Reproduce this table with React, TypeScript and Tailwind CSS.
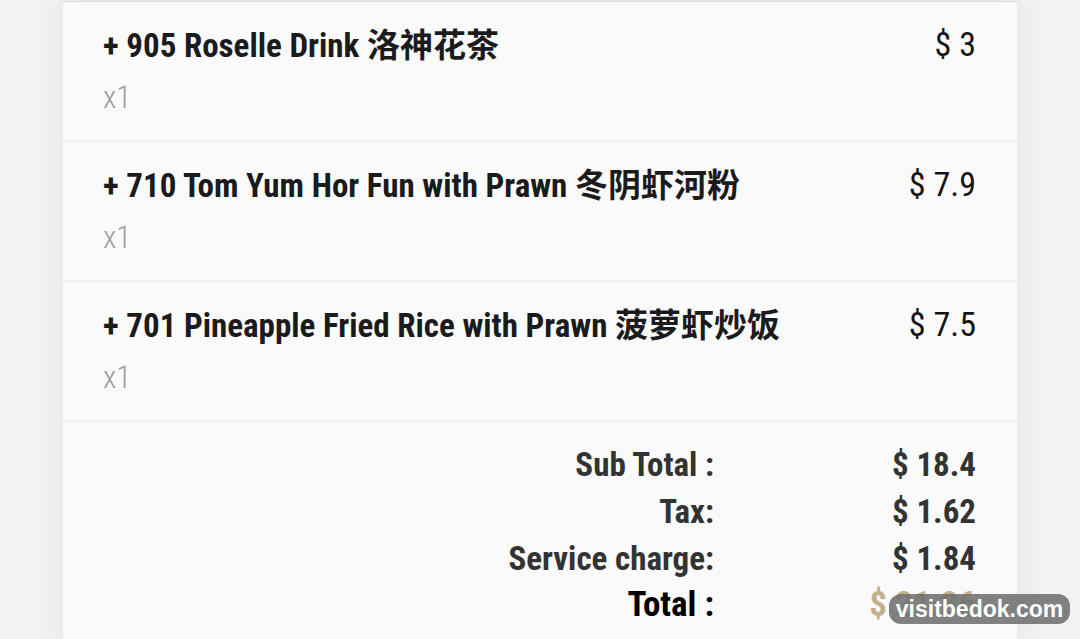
const ITEMS = [
  { name: "+ 905 Roselle Drink 洛神花茶", qty: 1, price: "3" },
  { name: "+ 710 Tom Yum Hor Fun with Prawn 冬阴虾河粉", qty: 1, price: "7.9" },
  { name: "+ 701 Pineapple Fried Rice with Prawn 菠萝虾炒饭", qty: 1, price: "7.5" },
];

const SUMMARY = [
  { label: "Sub Total :", value: "$ 18.4" },
  { label: "Tax:", value: "$ 1.62" },
  { label: "Service charge:", value: "$ 1.84" },
];

const FONT =
  "font-['Roboto_Condensed','Liberation_Sans_Narrow','DejaVu_Sans_Condensed',Roboto,'Noto_Sans_CJK_SC',sans-serif]";

export default function App() {
  return (
    <div className={`relative h-[639px] w-[1080px] overflow-hidden bg-[#f2f2f2] ${FONT}`}>
      <div className="mx-[63px] mt-px h-full border-t-[1.5px] border-[#dddce3] bg-[#fafafa] shadow-[0_0_28px_rgba(0,0,0,0.07)]">
        {ITEMS.map((item) => (
          <div
            key={item.name}
            className="flex h-[140px] items-start justify-between border-b-2 border-[#efefef] pr-[41px] pl-[40px] pt-[25px]"
          >
            <div>
              <p className="text-[33px] leading-[38px] font-bold text-[#1b1b1b]">{item.name}</p>
              <p className="mt-[16px] text-[31px] leading-[34px] font-light text-[#9c9ca6]">x{item.qty}</p>
            </div>
            <p className="mt-[-1px] text-[34px] leading-[36px] text-[#151515]">$ {item.price}</p>
          </div>
        ))}

        <div className="grid grid-cols-[1fr_262px] pt-[19px] pr-[41px] pl-[40px] text-[33px] leading-[47px] font-bold text-[#333]">
          {SUMMARY.map((row) => (
            <div key={row.label} className="contents">
              <p className="text-right">{row.label}</p>
              <p className="text-right">{row.value}</p>
            </div>
          ))}
          <p className="text-right text-[35px] leading-[45px] text-black">Total :</p>
          <p className="text-right text-[35px] leading-[45px] text-[#c4b08c]">$ 21.86</p>
        </div>
      </div>

      <div className="absolute right-[10px] bottom-[15px] flex h-[30px] w-[181px] items-center justify-center rounded-[12px] bg-[rgba(112,112,112,0.88)] font-['Liberation_Sans',Arial,sans-serif] text-[23px] font-bold text-white">
        visitbedok.com
      </div>
    </div>
  );
}
